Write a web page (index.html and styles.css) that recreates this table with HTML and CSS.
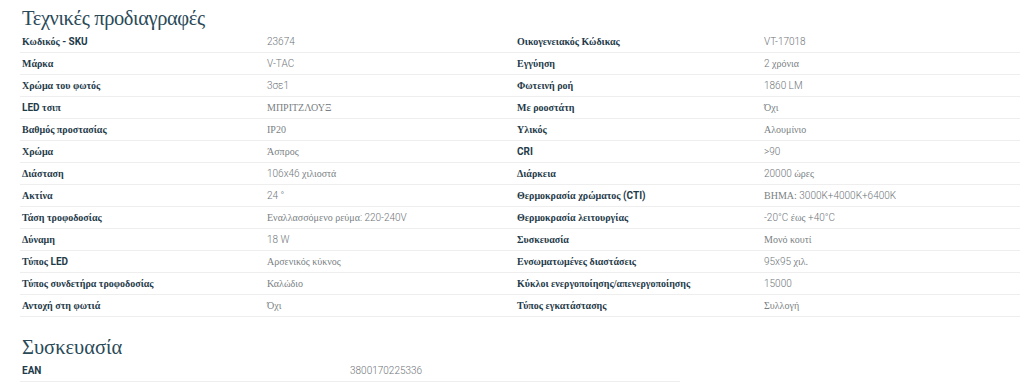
FILE: index.html
```html
<!DOCTYPE html>
<html lang="el">
<head>
<meta charset="utf-8">
<title>Τεχνικές προδιαγραφές</title>
<link rel="stylesheet" href="styles.css">
</head>
<body>
<div class="page">
  <h2 class="heading heading-main">Τεχνικές προδιαγραφές</h2>
  <div class="specs">
    <table class="spec-table spec-left">
      <colgroup><col class="c-label-l"><col></colgroup>
      <tr><th>Κωδικός <span class="lat">- SKU</span></th><td><span class="lat">23674</span></td></tr>
      <tr><th>Μάρκα</th><td><span class="lat">V-TAC</span></td></tr>
      <tr><th>Χρώμα του φωτός</th><td><span class="lat">3σε1</span></td></tr>
      <tr><th><span class="lat">LED</span> τσιπ</th><td>ΜΠΡΙΤΖΛΟΥΞ</td></tr>
      <tr><th>Βαθμός προστασίας</th><td>ΙΡ20</td></tr>
      <tr><th>Χρώμα</th><td>Άσπρος</td></tr>
      <tr><th>Διάσταση</th><td><span class="lat">106x46</span> χιλιοστά</td></tr>
      <tr><th>Ακτίνα</th><td><span class="lat">24 °</span></td></tr>
      <tr><th>Τάση τροφοδοσίας</th><td>Εναλλασσόμενο ρεύμα<span class="lat">: 220-240V</span></td></tr>
      <tr><th>Δύναμη</th><td><span class="lat">18 W</span></td></tr>
      <tr><th>Τύπος <span class="lat">LED</span></th><td>Αρσενικός κύκνος</td></tr>
      <tr><th>Τύπος συνδετήρα τροφοδοσίας</th><td>Καλώδιο</td></tr>
      <tr><th>Αντοχή στη φωτιά</th><td>Όχι</td></tr>
    </table>
    <table class="spec-table spec-right">
      <colgroup><col class="c-label-r"><col></colgroup>
      <tr><th>Οικογενειακός Κώδικας</th><td><span class="lat">VT-17018</span></td></tr>
      <tr><th>Εγγύηση</th><td><span class="lat">2</span> χρόνια</td></tr>
      <tr><th>Φωτεινή ροή</th><td><span class="lat">1860 LM</span></td></tr>
      <tr><th>Με ροοστάτη</th><td>Όχι</td></tr>
      <tr><th>Υλικός</th><td>Αλουμίνιο</td></tr>
      <tr><th><span class="lat">CRI</span></th><td><span class="lat">&gt;90</span></td></tr>
      <tr><th>Διάρκεια</th><td><span class="lat">20000</span> ώρες</td></tr>
      <tr><th>Θερμοκρασία χρώματος <span class="lat">(CTI)</span></th><td>ΒΗΜΑ: <span class="lat">3000K+4000K+6400K</span></td></tr>
      <tr><th>Θερμοκρασία λειτουργίας</th><td><span class="lat">-20°C</span> έως <span class="lat">+40°C</span></td></tr>
      <tr><th>Συσκευασία</th><td>Μονό κουτί</td></tr>
      <tr><th>Ενσωματωμένες διαστάσεις</th><td><span class="lat">95x95</span> χιλ.</td></tr>
      <tr><th>Κύκλοι ενεργοποίησης/απενεργοποίησης</th><td><span class="lat">15000</span></td></tr>
      <tr><th>Τύπος εγκατάστασης</th><td>Συλλογή</td></tr>
    </table>
  </div>
  <h2 class="heading heading-pack">Συσκευασία</h2>
  <table class="spec-table spec-pack">
    <colgroup><col class="c-label-p"><col></colgroup>
    <tr><th><span class="lat">EAN</span></th><td><span class="lat">3800170225336</span></td></tr>
  </table>
</div>
</body>
</html>
```

FILE: styles.css
```css
html, body {
  margin: 0;
  padding: 0;
  background: #ffffff;
}

.page {
  padding: 5px 4px 0 20px;
  font-family: "Liberation Serif", "Times New Roman", serif;
  color: #1f3b4a;
}

.heading {
  margin: 0;
  padding-left: 2px;
  font-family: "Liberation Serif", "Times New Roman", serif;
  font-weight: normal;
  line-height: 26px;
  color: #2a4a58;
}

.heading-main {
  font-size: 20.5px;
  letter-spacing: -0.4px;
}

.heading-pack {
  margin-top: 17px;
  font-size: 20.5px;
}

.specs {
  display: grid;
  grid-template-columns: 494px 506px;
}

.spec-table {
  border-collapse: collapse;
  width: 100%;
  table-layout: fixed;
}

.c-label-l { width: 245px; }
.c-label-r { width: 248px; }
.c-label-p { width: 328px; }

.spec-pack {
  width: 660px;
}

.spec-table th,
.spec-table td {
  height: 21px;
  padding: 0 2px;
  border-bottom: 1px solid #eeeeee;
  text-align: left;
  vertical-align: middle;
  font-size: 10px;
  line-height: 12px;
  white-space: nowrap;
}

.spec-right th {
  padding-left: 3px;
}

.spec-table th {
  font-family: "Liberation Serif", "Times New Roman", serif;
  font-weight: bold;
  color: #1f3b4a;
}

.spec-table th .lat {
  font-family: Roboto, "Liberation Sans", sans-serif;
  font-weight: 700;
}

.spec-table td {
  font-family: "Liberation Serif", "Times New Roman", serif;
  font-weight: normal;
  color: #7a7f84;
}

.spec-table td .lat {
  font-family: Roboto, "Liberation Sans", sans-serif;
  font-weight: 300;
  color: #6f757a;
}
```
